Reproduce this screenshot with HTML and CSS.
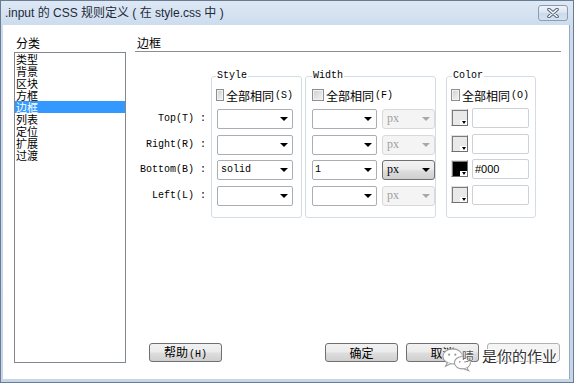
FILE: index.html
```html
<!DOCTYPE html>
<html lang="zh-CN">
<head>
  <meta charset="UTF-8">
  <title>.input 的 CSS 规则定义</title>
  <link rel="stylesheet" href="styles.css">
</head>
<body>
  <div class="window">
    <div class="titlebar">
      <span class="title">.input 的 CSS 规则定义 ( 在 style.css 中 )</span>
      <button class="close">
        <svg width="12" height="10" viewBox="0 0 12 10">
          <path d="M2 1.5 L10 8.5 M10 1.5 L2 8.5" stroke="#55657a" stroke-width="3.6" stroke-linecap="round"/>
          <path d="M2 1.5 L10 8.5 M10 1.5 L2 8.5" stroke="#ffffff" stroke-width="1.6" stroke-linecap="round"/>
        </svg>
      </button>
    </div>
    <div class="client">
      <div class="category">
        <div class="cat-label">分类</div>
        <ul class="cat-list">
          <li>类型</li>
          <li>背景</li>
          <li>区块</li>
          <li>方框</li>
          <li class="selected">边框</li>
          <li>列表</li>
          <li>定位</li>
          <li>扩展</li>
          <li>过渡</li>
        </ul>
      </div>
      <div class="panel">
        <div class="panel-title">边框</div>
        <div class="sides">
          <div class="side-labels">
            <div class="side-label">Top(T) :</div>
            <div class="side-label">Right(R) :</div>
            <div class="side-label">Bottom(B) :</div>
            <div class="side-label">Left(L) :</div>
          </div>

          <fieldset class="group group-style">
            <legend>Style</legend>
            <div class="same"><span class="check"></span>全部相同<span class="key">(S)</span></div>
            <div class="rows">
              <div class="combo"></div>
              <div class="combo"></div>
              <div class="combo">solid</div>
              <div class="combo"></div>
            </div>
          </fieldset>

          <fieldset class="group group-width">
            <legend>Width</legend>
            <div class="same"><span class="check"></span>全部相同<span class="key">(F)</span></div>
            <div class="rows">
              <div class="row">
                <div class="combo combo-width"></div>
                <div class="unit disabled">px</div>
              </div>
              <div class="row">
                <div class="combo combo-width"></div>
                <div class="unit disabled">px</div>
              </div>
              <div class="row">
                <div class="combo combo-width">1</div>
                <div class="unit">px</div>
              </div>
              <div class="row">
                <div class="combo combo-width"></div>
                <div class="unit disabled">px</div>
              </div>
            </div>
          </fieldset>

          <fieldset class="group group-color">
            <legend>Color</legend>
            <div class="same"><span class="check"></span>全部相同<span class="key">(O)</span></div>
            <div class="rows">
              <div class="row">
                <span class="swatch"></span>
                <div class="color-input"></div>
              </div>
              <div class="row">
                <span class="swatch"></span>
                <div class="color-input"></div>
              </div>
              <div class="row">
                <span class="swatch swatch-black"></span>
                <div class="color-input">#000</div>
              </div>
              <div class="row">
                <span class="swatch"></span>
                <div class="color-input"></div>
              </div>
            </div>
          </fieldset>
        </div>

        <div class="buttons">
          <button class="btn">帮助<span class="key">(H)</span></button>
          <button class="btn btn-ok">确定</button>
          <button class="btn">取消</button>
          <button class="btn btn-light"></button>
        </div>
      </div>
    </div>

    <div class="watermark">
      <svg width="32" height="26" viewBox="0 0 36 28">
        <ellipse cx="12" cy="10" rx="11" ry="8.5" fill="#fff" stroke="#9a9a9a" stroke-width="1.2"/>
        <path d="M6 17 L4 21 L10 18" fill="#fff" stroke="#9a9a9a" stroke-width="1.2"/>
        <ellipse cx="23" cy="17" rx="9" ry="7" fill="#fff" stroke="#9a9a9a" stroke-width="1.2"/>
        <path d="M28 23 L30 26 L25 24" fill="#fff" stroke="#9a9a9a" stroke-width="1.2"/>
        <circle cx="8" cy="8" r="1.2" fill="#9a9a9a"/>
        <circle cx="15" cy="8" r="1.2" fill="#9a9a9a"/>
        <circle cx="20" cy="16" r="1" fill="#9a9a9a"/>
        <circle cx="26" cy="16" r="1" fill="#9a9a9a"/>
      </svg>
      <span class="wm-char">啧</span>
      <span class="wm-text">是你的作业</span>
    </div>
  </div>
</body>
</html>
```

FILE: styles.css
```css
body {
  margin: 0;
  font-family: "Liberation Sans", "Noto Sans CJK SC", sans-serif;
  font-size: 12px;
  color: #000;
}
.window {
  position: relative;
  width: 574px;
  height: 383px;
  box-sizing: border-box;
  border: 1px solid #6b7c92;
  padding: 0 3px 3px 2px;
  background: linear-gradient(#dde8f5, #cddcee 24px, #c6d6ea);
  display: flex;
  flex-direction: column;
}
.titlebar {
  height: 24px;
  display: flex;
  align-items: flex-start;
}
.title {
  padding: 5px 0 0 2px;
  line-height: 15px;
  font-size: 12px;
  color: #1e2a38;
}
.close {
  margin: 4px 2px 0 auto;
  width: 30px;
  height: 16px;
  padding: 0;
  border: 1px solid #8b9bb0;
  border-radius: 3px;
  background: linear-gradient(#eef3fa, #d9e4f1 50%, #cbd9ea 51%, #d6e2f0);
  display: flex;
  align-items: center;
  justify-content: center;
}
.client {
  flex: 1;
  background: #fff;
  display: flex;
  border-right: 1px solid #9aa9bc;
}
.category {
  margin-left: 11px;
  padding-top: 11px;
}
.cat-label {
  height: 14px;
  line-height: 14px;
  padding-left: 2px;
  margin-bottom: 2px;
  font-family: "Noto Sans CJK SC", sans-serif;
}
.cat-list {
  list-style: none;
  margin: 0;
  padding: 0;
  width: 112px;
  height: 311px;
  box-sizing: border-box;
  border: 1px solid #828790;
  font-family: "Noto Sans CJK SC", sans-serif;
  font-size: 11px;
}
.cat-list li {
  height: 12px;
  line-height: 12px;
  padding-left: 1px;
}
.cat-list li.selected {
  background: #3399ff;
  color: #fff;
}
.panel {
  margin-left: 9px;
  width: 426px;
  padding: 11px 0 17px;
  display: flex;
  flex-direction: column;
}
.panel-title {
  height: 15px;
  line-height: 14px;
  padding-left: 2px;
  border-bottom: 1px solid #8e8e8e;
  font-family: "Noto Sans CJK SC", sans-serif;
}
.sides {
  display: flex;
  align-items: flex-start;
  margin-top: 18px;
}
.side-labels {
  width: 76px;
  padding-top: 39px;
  display: grid;
  row-gap: 5.67px;
}
.side-label {
  height: 20px;
  line-height: 20px;
  text-align: right;
  padding-right: 5px;
  font-family: "Liberation Mono", monospace;
  font-size: 10px;
}
.group {
  margin: 0;
  padding: 0 8px 11px 4px;
  border: 1px solid #d5dde4;
  border-radius: 3px;
  min-width: 0;
}
.group legend {
  padding: 0 1px;
  font-family: "Liberation Mono", monospace;
  font-size: 10px;
  line-height: 12px;
}
.group-style {
  width: 91px;
  box-sizing: border-box;
}
.group-width {
  width: 131px;
  box-sizing: border-box;
  margin-left: 3px;
  padding: 0 0 11px 6px;
}
.group-color {
  width: 90px;
  box-sizing: border-box;
  margin-left: 10px;
  padding: 0 6px 11px 4px;
}
.group-color legend {
  margin-left: 1px;
}
.same {
  margin-top: 6px;
  height: 14px;
  display: flex;
  align-items: center;
  font-family: "Noto Sans CJK SC", sans-serif;
  font-size: 12px;
  white-space: nowrap;
}
.check {
  width: 12px;
  height: 12px;
  box-sizing: border-box;
  border: 1px solid #8e8f8f;
  background: linear-gradient(135deg, #cfcfcf, #f4f4f4);
  box-shadow: inset 0 0 0 1px #f2f2f2;
  margin-right: 2px;
}
.key {
  font-family: "Liberation Mono", monospace;
  font-size: 10px;
  margin-left: 1px;
}
.rows {
  margin-top: 7px;
  display: grid;
  row-gap: 5.67px;
}
.row {
  display: flex;
  align-items: flex-start;
  height: 20px;
}
.combo {
  position: relative;
  width: 76px;
  height: 20px;
  box-sizing: border-box;
  border: 1px solid #abadb3;
  border-radius: 2px;
  padding-left: 3px;
  line-height: 17px;
  font-family: "Liberation Mono", monospace;
  font-size: 10px;
  background: #fff;
}
.group-style .combo {
  margin-left: 1px;
}
.combo::after,
.unit::after {
  content: "";
  position: absolute;
  right: 4px;
  top: 7px;
  border-left: 4px solid transparent;
  border-right: 4px solid transparent;
  border-top: 4px solid #000;
}
.combo-width {
  width: 65px;
  padding-left: 2px;
}
.unit {
  position: relative;
  margin-left: 5px;
  width: 53px;
  height: 20px;
  box-sizing: border-box;
  border: 1px solid #707070;
  border-radius: 3px;
  padding-left: 4px;
  line-height: 17px;
  font-family: "Liberation Serif", serif;
  font-size: 12px;
  background: linear-gradient(#f2f2f2, #ebebeb 45%, #dddddd 55%, #cfcfcf);
}
.unit.disabled {
  border-color: #d9d9d9;
  background: #f4f4f4;
  color: #a0a0a0;
}
.unit.disabled::after {
  border-top-color: #a8a8a8;
}
.swatch {
  position: relative;
  width: 17px;
  height: 17px;
  box-sizing: border-box;
  border: 1px solid;
  border-color: #e0e0e0 #6f6f6f #6f6f6f #e0e0e0;
  background: #e9e9e9;
  box-shadow: inset 1px 1px 0 #7c7c7c;
}
.swatch-black {
  background: #000;
}
.swatch::after {
  content: "";
  position: absolute;
  right: 0;
  bottom: 0;
  width: 7px;
  height: 5px;
  background: #fff;
}
.swatch::before {
  content: "";
  position: absolute;
  right: 1px;
  bottom: 1px;
  z-index: 1;
  border-left: 2.5px solid transparent;
  border-right: 2.5px solid transparent;
  border-top: 3px solid #000;
}
.color-input {
  margin-left: 4px;
  margin-top: -1px;
  width: 57px;
  height: 20px;
  box-sizing: border-box;
  border: 1px solid #cdd2d8;
  border-radius: 2px;
  padding-left: 2px;
  line-height: 18px;
  font-family: "Liberation Sans", sans-serif;
  font-size: 11px;
}
.buttons {
  margin-top: auto;
  display: flex;
  gap: 8px;
  padding: 0 1px 0 14px;
}
.btn {
  width: 73px;
  height: 19px;
  padding: 0;
  border: 1px solid #707070;
  border-radius: 3px;
  background: linear-gradient(#f2f2f2, #ebebeb 45%, #dddddd 55%, #cfcfcf);
  font-family: "Noto Sans CJK SC", sans-serif;
  font-size: 12px;
  line-height: 16px;
  color: #000;
}
.btn-ok {
  margin-left: auto;
}
.btn-light {
  border-color: #adb2b5;
  background: #f4f4f4;
}
.watermark {
  position: absolute;
  left: 441px;
  top: 346px;
  display: flex;
  align-items: flex-start;
}
.wm-char {
  margin: 2px 0 0 -12px;
  font-family: "Noto Sans CJK SC", sans-serif;
  font-size: 12px;
  line-height: 14px;
  color: #555;
  text-shadow: 0 0 2px #fff, 0 0 2px #fff;
}
.wm-text {
  margin: 1px 0 0 8px;
  font-family: "Noto Sans CJK SC", sans-serif;
  font-size: 15px;
  line-height: 16px;
  color: #333;
  text-shadow: 1px 0 0 #fff, -1px 0 0 #fff, 0 1px 0 #fff, 0 -1px 0 #fff;
}
```
